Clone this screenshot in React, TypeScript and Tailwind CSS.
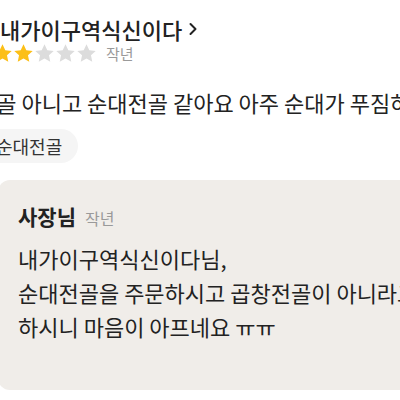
import { ChevronRight } from "lucide-react";

const font = { fontFamily: '"Noto Sans CJK KR", "Noto Sans", sans-serif' };

function Star({ on }: { on: boolean }) {
  return (
    <svg viewBox="0 0 24 24" className="h-[21px] w-[21px] shrink-0">
      <path
        d="M12 1.5l3.2 6.7 7.3.9-5.4 5 1.5 7.3L12 17.7l-6.6 3.7 1.5-7.3-5.4-5 7.3-.9z"
        fill={on ? "#fcbf17" : "#dcdcdc"}
      />
    </svg>
  );
}

export default function App() {
  return (
    <div className="h-[400px] w-[400px] overflow-hidden bg-white text-[#222]" style={font}>
      <div className="pt-[15px]">
        {/* reviewer */}
        <div className="flex h-[28px] items-center">
          <span className="whitespace-nowrap text-[22px] font-medium leading-[28px]">
            내가이구역식신이다
          </span>
          <ChevronRight className="ml-[1px] h-[20px] w-[20px] text-[#222]" strokeWidth={2.4} />
        </div>
        <div className="flex items-center">
          <div className="-ml-[8px] flex items-center">
            <Star on />
            <Star on />
            <Star on={false} />
            <Star on={false} />
            <Star on={false} />
          </div>
          <span className="ml-[9px] text-[15px] leading-[20px] text-[#9a9a9a]">작년</span>
        </div>

        {/* review body */}
        <p className="-ml-[24px] mt-[23px] whitespace-nowrap text-[22px] leading-[30px] text-[#222]">
          전골 아니고 순대전골 같아요 아주 순대가 푸짐하고 맛있어요
        </p>

        {/* menu chip */}
        <div className="-ml-[34px] mt-[12px] inline-flex h-[34px] items-center rounded-full bg-[#f5f5f5] pl-[30px] pr-[16px]">
          <span className="text-[18px] leading-[24px] text-[#333]">순대전골</span>
        </div>

        {/* owner reply */}
        <div className="-ml-[2px] mt-[17px] mr-[-20px] h-[210px] rounded-[12px] bg-[#f0ede9] pl-[20px] pt-[22px]">
          <div className="flex items-baseline">
            <span className="text-[21px] font-bold leading-[28px] text-[#222]">사장님</span>
            <span className="ml-[9px] text-[16px] leading-[20px] text-[#9a9a9a]">작년</span>
          </div>
          <div className="mt-[11px] whitespace-nowrap text-[22px] leading-[34px] text-[#222]">
            <p>내가이구역식신이다님,</p>
            <p>순대전골을 주문하시고 곱창전골이 아니라고</p>
            <p>하시니 마음이 아프네요 ㅠㅠ</p>
          </div>
        </div>
      </div>
    </div>
  );
}
